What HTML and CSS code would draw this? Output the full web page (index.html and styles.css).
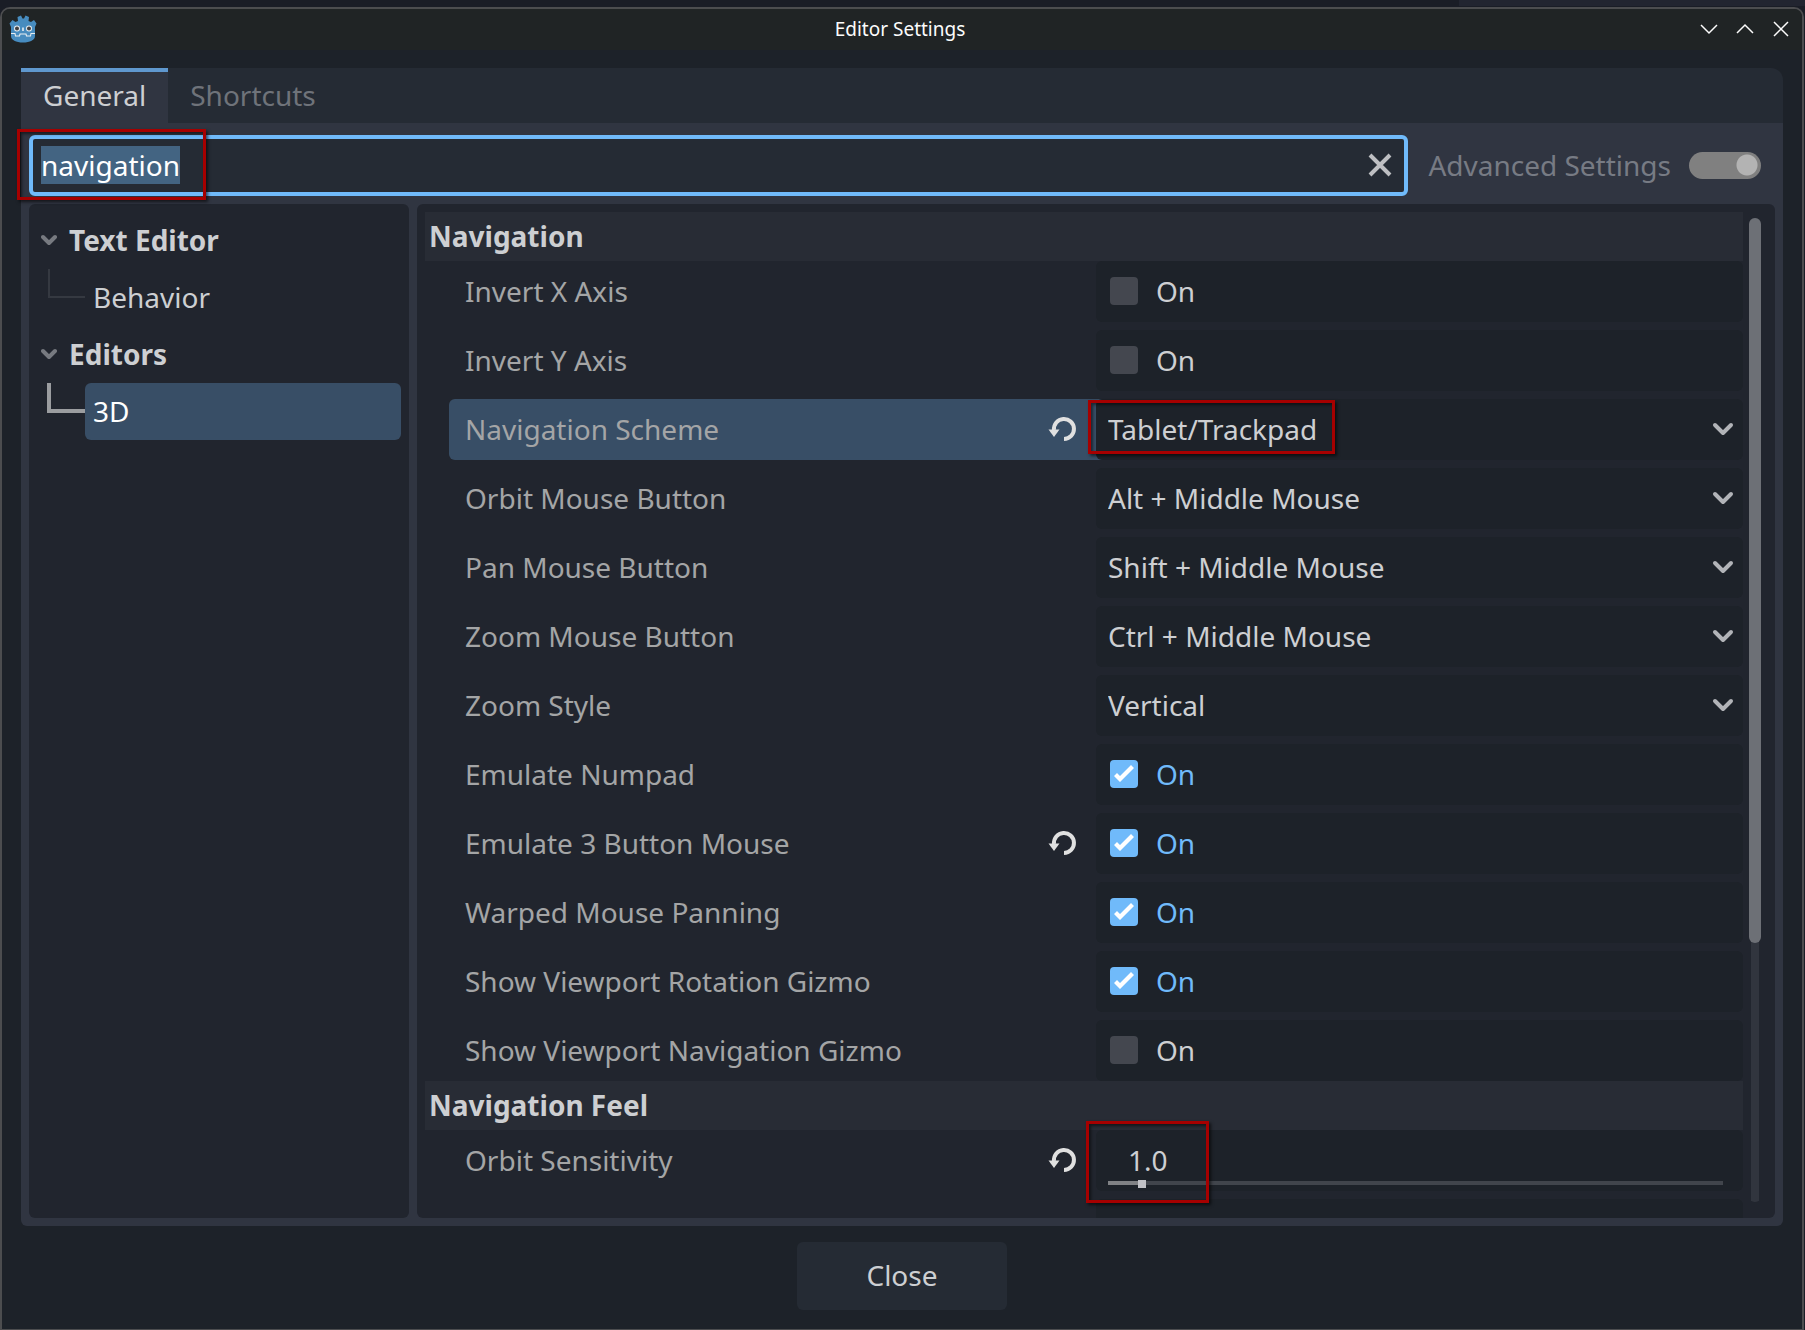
FILE: index.html
```html
<!DOCTYPE html>
<html lang="en">
<head>
    <meta charset="UTF-8">
    <meta name="viewport" content="width=device-width, initial-scale=1.0">
    <title>Editor Settings</title>
    <link rel="stylesheet" href="styles.css">
</head>
<body>

    <!-- shared icons -->
    <svg class="sprite" aria-hidden="true">
        <symbol id="reload" viewBox="0 0 32 32">
            <path d="M6 17A10 10 0 1 1 16 26" fill="none" stroke="#e0e0e0" stroke-width="4"/>
            <path d="M.5 16.5h11L6 24z" fill="#e0e0e0"/>
        </symbol>
        <symbol id="arrow" viewBox="0 0 24 24">
            <path d="M4 8l8 8 8-8" fill="none" stroke="#b2b4b8" stroke-width="4" stroke-linecap="round" stroke-linejoin="round"/>
        </symbol>
        <symbol id="fold" viewBox="0 0 16 16">
            <path d="M2 5l6 6 6-6" fill="none" stroke="#777a80" stroke-width="4" stroke-linecap="round" stroke-linejoin="round"/>
        </symbol>
    </svg>

    <div class="window">
        <header class="titlebar">
            <svg class="logo" viewBox="0 0 28 28">
                <path d="M.5 8.500l3-3.500 3 2 2.500-1-.5-4 3.500-1.500 1.500 3h1.500l1.500-3L20 2l-.5 4 2.500 1 3-2 2.500 3.500-1.500 3.500v9c0 4-5 6.500-12 6.500S2 25 2 21v-9z" fill="#478cbf"/>
                <circle cx="8" cy="13.500" r="3" fill="#e8eef2"/>
                <circle cx="20" cy="13.500" r="3" fill="#e8eef2"/>
                <circle cx="8" cy="13.500" r="2" fill="#414042"/>
                <circle cx="20" cy="13.500" r="2" fill="#414042"/>
                <path d="M14 12.500v3.500" stroke="#e8eef2" stroke-width="1.600"/>
                <path d="M2 18.500h4l.5 2.500h4l.5-2h6l.5 2h4l.5-2.500h4" fill="none" stroke="#e8eef2" stroke-width="1.100"/>
            </svg>
            <h1 class="title">Editor Settings</h1>
            <div class="window-buttons">
                <button type="button" aria-label="Minimize"><svg viewBox="0 0 20 20"><path d="M2 6l8 8 8-8"/></svg></button>
                <button type="button" aria-label="Maximize"><svg viewBox="0 0 20 20"><path d="M2 14l8-8 8 8"/></svg></button>
                <button type="button" aria-label="Close window"><svg viewBox="0 0 20 20"><path d="M3 3l14 14M17 3L3 17"/></svg></button>
            </div>
        </header>

        <main class="dialog">
            <div class="tabs" role="tablist">
                <button class="tab active" type="button" role="tab" aria-selected="true">General</button>
                <button class="tab" type="button" role="tab" aria-selected="false">Shortcuts</button>
            </div>

            <div class="panel">
                <div class="toolbar">
                    <div class="search">
                        <input type="text" id="search" value="navigation" aria-label="Filter Settings" spellcheck="false">
                        <button type="button" aria-label="Clear"><svg viewBox="0 0 24 24"><path d="M2 2l20 20M22 2L2 22"/></svg></button>
                        <span class="mark mark-search"></span>
                    </div>
                    <label class="advanced">Advanced Settings <input type="checkbox" class="switch" checked></label>
                </div>

                <div class="columns">
                    <nav class="tree">
                        <div class="branch"><svg><use href="#fold"/></svg>Text Editor</div>
                        <div class="leaf"><span class="line"></span><a href="#">Behavior</a></div>
                        <div class="branch"><svg><use href="#fold"/></svg>Editors</div>
                        <div class="leaf selected"><span class="line"></span><a href="#">3D</a></div>
                    </nav>

                    <div class="inspector">
                        <div class="list">
                            <h2>Navigation</h2>
                            <div class="group">
                                <div class="row">
                                    <label for="invert_x">Invert X Axis</label>
                                    <label class="value check"><input type="checkbox" id="invert_x"><span>On</span></label>
                                </div>
                                <div class="row">
                                    <label for="invert_y">Invert Y Axis</label>
                                    <label class="value check"><input type="checkbox" id="invert_y"><span>On</span></label>
                                </div>
                                <div class="row current">
                                    <label for="scheme">Navigation Scheme <svg class="reload"><use href="#reload"/></svg></label>
                                    <div class="value">
                                        <select id="scheme"><option>Tablet/Trackpad</option></select>
                                        <svg class="arrow"><use href="#arrow"/></svg>
                                        <span class="mark mark-scheme"></span>
                                    </div>
                                </div>
                                <div class="row">
                                    <label for="orbit">Orbit Mouse Button</label>
                                    <div class="value">
                                        <select id="orbit"><option>Alt + Middle Mouse</option></select>
                                        <svg class="arrow"><use href="#arrow"/></svg>
                                    </div>
                                </div>
                                <div class="row">
                                    <label for="pan">Pan Mouse Button</label>
                                    <div class="value">
                                        <select id="pan"><option>Shift + Middle Mouse</option></select>
                                        <svg class="arrow"><use href="#arrow"/></svg>
                                    </div>
                                </div>
                                <div class="row">
                                    <label for="zoom">Zoom Mouse Button</label>
                                    <div class="value">
                                        <select id="zoom"><option>Ctrl + Middle Mouse</option></select>
                                        <svg class="arrow"><use href="#arrow"/></svg>
                                    </div>
                                </div>
                                <div class="row">
                                    <label for="zoom_style">Zoom Style</label>
                                    <div class="value">
                                        <select id="zoom_style"><option>Vertical</option></select>
                                        <svg class="arrow"><use href="#arrow"/></svg>
                                    </div>
                                </div>
                                <div class="row">
                                    <label for="numpad">Emulate Numpad</label>
                                    <label class="value check"><input type="checkbox" id="numpad" checked><span>On</span></label>
                                </div>
                                <div class="row">
                                    <label for="three_button">Emulate 3 Button Mouse <svg class="reload"><use href="#reload"/></svg></label>
                                    <label class="value check"><input type="checkbox" id="three_button" checked><span>On</span></label>
                                </div>
                                <div class="row">
                                    <label for="warped">Warped Mouse Panning</label>
                                    <label class="value check"><input type="checkbox" id="warped" checked><span>On</span></label>
                                </div>
                                <div class="row">
                                    <label for="rotation_gizmo">Show Viewport Rotation Gizmo</label>
                                    <label class="value check"><input type="checkbox" id="rotation_gizmo" checked><span>On</span></label>
                                </div>
                                <div class="row">
                                    <label for="navigation_gizmo">Show Viewport Navigation Gizmo</label>
                                    <label class="value check"><input type="checkbox" id="navigation_gizmo"><span>On</span></label>
                                </div>
                            </div>

                            <h2>Navigation Feel</h2>
                            <div class="group">
                                <div class="row">
                                    <label for="sensitivity">Orbit Sensitivity <svg class="reload"><use href="#reload"/></svg></label>
                                    <div class="value number">
                                        <input type="text" id="sensitivity" value="1.0">
                                        <input type="range" min="0" max="20" step="0.1" value="1" aria-label="Orbit Sensitivity">
                                        <span class="mark mark-number"></span>
                                    </div>
                                </div>
                                <div class="row">
                                    <span></span>
                                    <div class="value"></div>
                                </div>
                            </div>
                        </div>
                        <div class="scrollbar"><div class="thumb"></div></div>
                    </div>
                </div>
            </div>
        </main>

        <footer class="footer">
            <button class="close" type="button">Close</button>
        </footer>
    </div>

    <script>
        const search = document.getElementById('search');
        search.focus();
        search.select();
    </script>
</body>
</html>
```

FILE: styles.css
```css
* {
    box-sizing: border-box;
}
body {
    margin: 0;
    height: 100vh;
    padding-top: 7px;
    display: flex;
    background: linear-gradient(#222530, #222530) top right / 346px 6px no-repeat #1a1d26;
    color: #cdcfd2;
    font-family: "Noto Sans", sans-serif;
    font-size: 28px;
    overflow: hidden;
}
button, input, select {
    font: inherit;
    color: inherit;
    background: none;
    border: none;
    outline: none;
    margin: 0;
    padding: 0;
}
.sprite {
    position: absolute;
    width: 0;
    height: 0;
}
.window {
    flex: 1;
    min-width: 0;
    display: flex;
    flex-direction: column;
    border: 2px solid #4c4d4f;
    border-bottom-width: 1px;
    border-radius: 10px 10px 0 0;
    margin-right: 1px;
    background-color: #1d2229;
    overflow: hidden;
}

/* title bar */
.titlebar {
    height: 41px;
    padding: 0 11px 2px 7px;
    display: grid;
    grid-template-columns: 1fr auto 1fr;
    align-items: center;
    background-color: #202425;
}
.logo {
    width: 28px;
    height: 28px;
}
.title {
    margin: 0;
    font-size: 19px;
    font-weight: normal;
    color: #fcfcfc;
}
.window-buttons {
    display: flex;
    justify-content: flex-end;
    gap: 16px;
}
.window-buttons button {
    width: 20px;
    height: 20px;
    display: flex;
}
.window-buttons svg {
    fill: none;
    stroke: #fcfcfc;
    stroke-width: 1.5;
}

/* tabs */
.dialog {
    flex: 1;
    min-height: 0;
    margin: 18px 19px 0;
    display: flex;
    flex-direction: column;
}
.tabs {
    display: flex;
    height: 55px;
    background-color: #252b34;
    border-top-right-radius: 12px;
}
.tab {
    padding: 0 22px 2px;
    color: #6f737a;
}
.tab.active {
    color: #cdcfd2;
    background-color: #303541;
    box-shadow: inset 0 4px #5f98cf;
}
.panel {
    flex: 1;
    min-height: 0;
    padding: 12px 8px 8px;
    display: flex;
    flex-direction: column;
    gap: 8px;
    background-color: #303541;
    border-radius: 0 0 6px 6px;
}

/* search */
.toolbar {
    display: flex;
    align-items: center;
}
.search {
    position: relative;
    flex: 1;
    height: 61px;
    display: flex;
    align-items: center;
    padding: 0 12px 1px 8px;
    border: 4px solid #70bafa;
    border-radius: 6px;
    background-color: #252b34;
}
.search input {
    flex: 1;
    min-width: 0;
    color: #fff;
}
.search input::selection {
    color: #fff;
    background-color: rgba(68, 101, 132, 0.99);
}
.search button {
    width: 24px;
    height: 24px;
    display: flex;
}
.search button svg {
    fill: none;
    stroke: #bebfc2;
    stroke-width: 4;
}
.advanced {
    display: flex;
    align-items: center;
    gap: 18px;
    padding: 0 14px 1px 20px;
    color: #777b84;
}
.switch {
    appearance: none;
    width: 72px;
    height: 27px;
    border-radius: 14px;
    background: radial-gradient(circle at 58px 13px, #b3b3b3 10px, #808080 11px);
}

/* red callout frames over the settings that matter */
.mark {
    position: absolute;
    z-index: 1;
    border: 3px solid #a60000;
    box-shadow: 2px 2px 3px rgba(0, 0, 0, 0.6), inset 2px 2px 3px rgba(0, 0, 0, 0.5);
    pointer-events: none;
}
.mark-search {
    left: -16px;
    top: -10px;
    width: 189px;
    height: 71px;
}
.mark-scheme {
    left: -8px;
    top: 1px;
    width: 247px;
    height: 54px;
}
.mark-number {
    left: -10px;
    top: -9px;
    width: 123px;
    height: 82px;
}

/* section tree */
.columns {
    flex: 1;
    min-height: 0;
    display: grid;
    grid-template-columns: 380px 1fr;
    gap: 8px;
}
.tree, .inspector {
    background-color: #21252e;
    border-radius: 6px;
    min-height: 0;
}
.tree {
    padding: 8px;
}
.branch, .leaf {
    display: flex;
    height: 57px;
    align-items: center;
}
.branch {
    gap: 12px;
    padding: 0 0 1px 4px;
    font-weight: bold;
}
.branch svg {
    width: 16px;
    height: 16px;
}
.leaf a {
    flex: 1;
    padding: 0 8px;
    line-height: 57px;
    color: inherit;
    text-decoration: none;
}
.line {
    align-self: flex-start;
    width: 37px;
    height: 29px;
    margin-left: 11px;
    border-left: 2px solid #353941;
    border-bottom: 2px solid #353941;
}
.selected .line {
    width: 38px;
    height: 30px;
    margin-left: 10px;
    border-width: 4px;
    border-color: #9b9da0;
}
.selected a {
    color: #fff;
    background-color: #384e66;
    border-radius: 6px;
}

/* inspector */
.inspector {
    display: flex;
    gap: 6px;
    padding: 8px 14px 0 8px;
}
.list {
    flex: 1;
    min-width: 0;
    overflow: hidden;
}
h2 {
    margin: 0;
    padding-left: 4px;
    font-size: 28px;
    line-height: 49px;
    background-color: #282c35;
}
.group {
    display: flex;
    flex-direction: column;
    gap: 8px;
    padding-left: 24px;
}
.row {
    display: grid;
    grid-template-columns: 1fr 1fr;
    height: 61px;
}
.row > label:first-child {
    display: flex;
    align-items: center;
    justify-content: space-between;
    padding: 0 16px 1px;
    color: #a4a5a6;
}
.row .value {
    position: relative;
    display: flex;
    align-items: center;
    padding-bottom: 1px;
    background-color: #1d2229;
    border-radius: 6px;
}
.current {
    border-radius: 6px;
    background: linear-gradient(to right, #384e66 51%, transparent 51%);
}
.reload {
    width: 32px;
    height: 32px;
}
select {
    appearance: none;
    flex: 1;
    height: 100%;
    padding-left: 12px;
}
.arrow {
    position: absolute;
    right: 8px;
    width: 24px;
    height: 24px;
    pointer-events: none;
}
.row .check {
    gap: 18px;
    padding-left: 14px;
}
.check input {
    appearance: none;
    width: 28px;
    height: 28px;
    border-radius: 4px;
    background-color: #44474f;
}
.check input:checked {
    background-color: #70bafa;
}
.check input:checked::before {
    content: "";
    display: block;
    height: 28px;
    background-color: #fff;
    clip-path: polygon(4px 16px, 7px 13px, 10px 16px, 21px 5px, 24px 8px, 10px 22px);
}
.check input:checked + span {
    color: #70bafa;
}
.number input[type="text"] {
    width: 100%;
    padding-left: 32px;
}
.number input[type="range"] {
    appearance: none;
    position: absolute;
    left: 12px;
    right: 20px;
    bottom: 3px;
    height: 8px;
    background: linear-gradient(to right, #808285 32px, #41454c 32px) 0 1px / 100% 4px no-repeat;
}
.number input[type="range"]::-webkit-slider-thumb {
    appearance: none;
    width: 8px;
    height: 8px;
    background-color: #c0c1c6;
}
.scrollbar {
    width: 12px;
    margin: 6px 0 16px;
    background: linear-gradient(#31353e, #31353e) center / 8px 100% no-repeat;
    border-radius: 6px;
}
.thumb {
    height: 73.7%;
    border-radius: 6px;
    background-color: #6d7076;
}

/* footer */
.footer {
    padding: 16px 0 19px;
    text-align: center;
    line-height: 0;
}
.close {
    width: 210px;
    height: 68px;
    padding-bottom: 2px;
    border-radius: 6px;
    background-color: #252b34;
}
```
